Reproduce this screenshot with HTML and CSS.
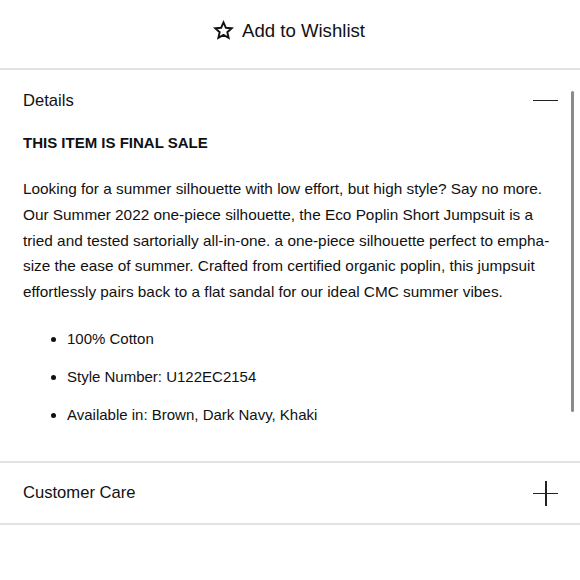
FILE: index.html
```html
<!DOCTYPE html>
<html>
<head>
<meta charset="utf-8">
<link rel="stylesheet" href="styles.css">
</head>
<body>
<div class="page">
  <div class="wishlist">
    <svg class="star" width="21" height="21" viewBox="0 0 24 24"><path d="M12 2.8l2.75 6.1 6.65.62-5.02 4.43 1.47 6.52L12 17.08l-5.85 3.39 1.47-6.52-5.02-4.43 6.65-.62z" fill="none" stroke="#111" stroke-width="2.2" stroke-linejoin="miter"/></svg>
    <span>Add to Wishlist</span>
  </div>
  <section class="acc">
    <div class="acc-head">
      <span>Details</span>
      <span class="minus"></span>
    </div>
    <div class="acc-body">
      <p class="final">THIS ITEM IS FINAL SALE</p>
      <p class="desc">Looking for a summer silhouette with low effort, but high style? Say no more. Our Summer 2022 one-piece silhouette, the Eco Poplin Short Jumpsuit is a tried and tested sartorially all-in-one. a one-piece silhouette perfect to empha&shy;size the ease of summer. Crafted from certified organic poplin, this jumpsuit effortlessly pairs back to a flat sandal for our ideal CMC summer vibes.</p>
      <ul class="list">
        <li>100% Cotton</li>
        <li>Style Number: U122EC2154</li>
        <li>Available in: Brown, Dark Navy, Khaki</li>
      </ul>
    </div>
  </section>
  <section class="acc last">
    <div class="acc-head">
      <span>Customer Care</span>
      <span class="plus"></span>
    </div>
  </section>
  <div class="scroll-indicator"></div>
</div>
</body>
</html>
```

FILE: styles.css
```css
* { box-sizing: border-box; }
html, body { margin: 0; padding: 0; background: #fff; }
body {
  font-family: "Liberation Sans", Arial, sans-serif;
  color: #111;
}
.page {
  position: relative;
  width: 580px;
  height: 580px;
  overflow: hidden;
}
.wishlist {
  height: 70px;
  display: flex;
  align-items: center;
  justify-content: center;
  gap: 8px;
  font-size: 18.6px;
  border-bottom: 2px solid #e2e2e2;
  padding-bottom: 7px;
  padding-right: 2px;
}
.star { display: block; }
.acc {
  border-bottom: 2px solid #e2e2e2;
  padding: 0 22px 0 23px;
}
.acc-head {
  height: 60px;
  display: flex;
  align-items: center;
  justify-content: space-between;
  font-size: 16.6px;
  padding-top: 1px;
}
.minus {
  width: 25px;
  height: 1.5px;
  background: #222;
}
.plus {
  position: relative;
  width: 25px;
  height: 25px;
}
.plus::before, .plus::after {
  content: "";
  position: absolute;
  background: #222;
}
.plus::before { left: 0; right: 0; top: 12px; height: 1.5px; }
.plus::after { top: 0; bottom: 0; left: 12px; width: 1.5px; }
.acc-body { padding-bottom: 34px; }
.final {
  margin: 0;
  font-weight: bold;
  font-size: 15px;
  line-height: 24px;
  padding-top: 1px;
}
.desc {
  margin: 21px 0 0;
  font-size: 15.35px;
  line-height: 25.8px;
  hyphens: manual;
}
.list {
  margin: 22px 0 0;
  padding-left: 44px;
  font-size: 15px;
  line-height: 24px;
}
.list li { margin-bottom: 14px; }
.list li:last-child { margin-bottom: 0; }
.scroll-indicator {
  position: absolute;
  left: 571px;
  top: 91px;
  width: 3px;
  height: 321px;
  border-radius: 2px;
  background: #8a8a8a;
}
```
